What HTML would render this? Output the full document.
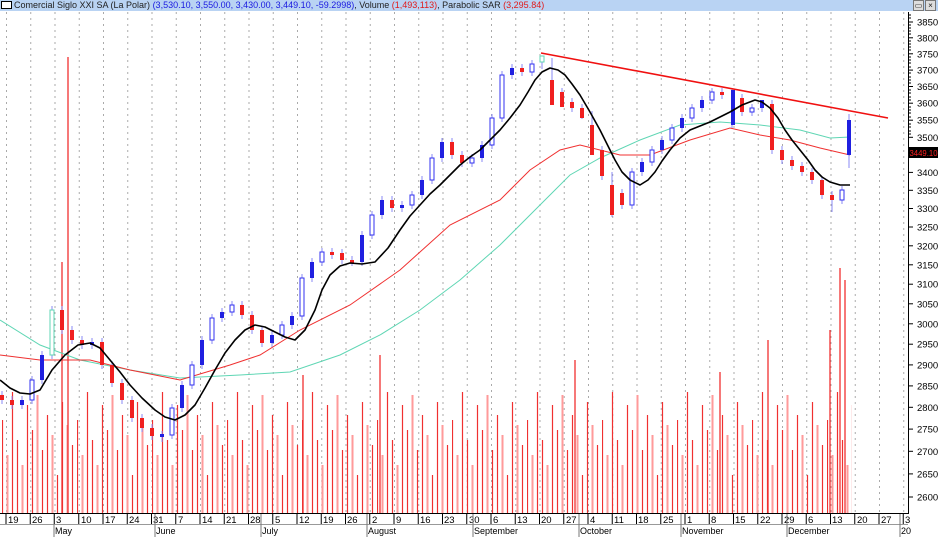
<!DOCTYPE html>
<html><head><meta charset="utf-8">
<style>
html,body{margin:0;padding:0;background:#fff;width:938px;height:537px;overflow:hidden;font-family:"Liberation Sans",sans-serif;}
#hdr{position:absolute;left:0;top:0;width:938px;height:11px;background:#b9d3f3;font-size:9px;line-height:11px;white-space:nowrap;color:#222;z-index:2}
#hdr .b{color:#1a1ae0}#hdr .r{color:#e01a1a}
#box{display:inline-block;width:9px;height:6px;border:1px solid #000;background:#fff;margin:0 2px 0 1px;vertical-align:-1px}
#btns{position:absolute;right:2px;top:0;height:11px}
#btns span{display:inline-block;width:9px;height:9px;border:1px solid #777;background:#ddd;font-size:8px;line-height:9px;text-align:center;margin-left:1px}
svg{position:absolute;left:0;top:0}
</style></head><body>
<div id="hdr"><span id="box"></span>Comercial Siglo XXI SA (La Polar) <span class="b">(3,530.10, 3,550.00, 3,430.00, 3,449.10, -59.2998)</span>, Volume <span class="r">(1,493,113)</span>, Parabolic SAR <span class="r">(3,295.84)</span><div id="btns"><span>&#9645;</span><span>×</span></div></div>
<svg width="938" height="537" xmlns="http://www.w3.org/2000/svg" font-family="Liberation Sans, sans-serif" font-size="9.5">
<defs>
<pattern id="grid" patternUnits="userSpaceOnUse" x="6" y="0" width="24.25" height="6">
<line x1="0.5" y1="0" x2="0.5" y2="2" stroke="#aaa"/>
</pattern>
<pattern id="vol" patternUnits="userSpaceOnUse" x="2" y="380" width="75" height="134">
<g>
<line x1="0.5" y1="134" x2="0.5" y2="40" stroke="#f03030" stroke-width="1.2"/>
<line x1="5.5" y1="134" x2="5.5" y2="75" stroke="#ff9a9a" stroke-width="2"/>
<line x1="10.5" y1="134" x2="10.5" y2="12" stroke="#f03030" stroke-width="1.2"/>
<line x1="15.5" y1="134" x2="15.5" y2="60" stroke="#f03030" stroke-width="1.2"/>
<line x1="20.5" y1="134" x2="20.5" y2="85" stroke="#ff9a9a" stroke-width="2"/>
<line x1="25.5" y1="134" x2="25.5" y2="25" stroke="#f03030" stroke-width="1.2"/>
<line x1="30.5" y1="134" x2="30.5" y2="50" stroke="#f03030" stroke-width="1.2"/>
<line x1="35.5" y1="134" x2="35.5" y2="15" stroke="#ff9a9a" stroke-width="2"/>
<line x1="40.5" y1="134" x2="40.5" y2="70" stroke="#f03030" stroke-width="1.2"/>
<line x1="45.5" y1="134" x2="45.5" y2="35" stroke="#f03030" stroke-width="1.2"/>
<line x1="50.5" y1="134" x2="50.5" y2="55" stroke="#ff9a9a" stroke-width="2"/>
<line x1="55.5" y1="134" x2="55.5" y2="95" stroke="#f03030" stroke-width="1.2"/>
<line x1="60.5" y1="134" x2="60.5" y2="22" stroke="#f03030" stroke-width="1.2"/>
<line x1="65.5" y1="134" x2="65.5" y2="45" stroke="#ff9a9a" stroke-width="2"/>
<line x1="70.5" y1="134" x2="70.5" y2="65" stroke="#f03030" stroke-width="1.2"/>
</g>
</pattern>
</defs>
<rect x="0" y="12" width="905" height="501" fill="url(#grid)"/>
<rect x="0" y="380" width="852" height="133" fill="url(#vol)"/>
<g stroke="#f03030" stroke-width="1.3">
<line x1="62" y1="513" x2="62" y2="262"/><line x1="68" y1="513" x2="68" y2="57"/>
<line x1="768" y1="513" x2="768" y2="340"/><line x1="830" y1="513" x2="830" y2="330"/>
<line x1="840" y1="513" x2="840" y2="268"/><line x1="845" y1="513" x2="845" y2="280"/>
<line x1="380" y1="513" x2="380" y2="355"/><line x1="303" y1="513" x2="303" y2="375"/>
<line x1="720" y1="513" x2="720" y2="372"/><line x1="575" y1="513" x2="575" y2="360"/>
</g>
<polyline fill="none" stroke="#5fd6b4" stroke-width="1" points="0,320 40,345 80,360 130,370 180,378 240,375 290,372 340,355 380,335 420,310 460,280 500,245 540,205 570,175 600,158 640,140 680,125 720,122 760,125 800,130 830,138 850,137"/>
<polyline fill="none" stroke="#f03030" stroke-width="1" points="0,355 40,360 90,360 130,370 180,380 230,365 260,355 300,330 350,305 400,270 450,225 500,200 530,170 560,150 580,145 620,155 650,155 690,140 730,128 760,135 790,140 820,148 850,155"/>
<path fill="none" stroke="#8a8af5" stroke-width="1" d="M2 391V404M12 396V409M22 396V409M32 376V404M42 351V384M52 306V359M62 306V334M72 326V344M82 336V349M92 338V349M102 338V369M112 361V387M122 379V404M132 396V422M142 414V432M152 424V440M162 431V442M172 404V439M182 381V412M192 361V389M202 336V369M212 314V344M222 308V322M232 301V316M242 301V319M252 311V334M262 326V347M272 331V347M282 321V339M292 312V329M302 274V320M312 258V282M322 248V266M332 248V259M342 249V264M352 256V266M362 231V266M372 211V239M382 196V219M392 196V212M402 201V212M412 191V209M422 176V199M432 154V184M442 138V162M452 138V159M462 151V167M472 154V167M482 141V162M492 114V149M502 71V122M512 64V79M522 64V76M532 60V76M542 58V69M552 58V96M562 88V106M572 98V112M582 104V119M592 111V154M602 146V180M612 172V217M622 189V209M632 168V209M642 158V176M652 146V166M662 136V154M672 124V144M682 114V132M692 104V122M702 96V112M712 88V104M722 88V99M732 88V128M742 94V116M752 104V116M762 100V112M772 100V154M782 146V164M792 156V170M802 162V176M812 168V184M822 176V199M832 191V212M842 186V204M849 114V168"/>
<g fill="#2020e0">
<rect x="20" y="400" width="4" height="5"/><rect x="30" y="380" width="4" height="20" fill="#fff" stroke="#3030f0"/><rect x="40" y="355" width="4" height="25"/><rect x="50" y="310" width="4" height="45" fill="#fff" stroke="#5fd6b4"/>
<rect x="90" y="342" width="4" height="3"/><rect x="160" y="434" width="4" height="3"/><rect x="170" y="408" width="4" height="27" fill="#fff" stroke="#3030f0"/><rect x="180" y="385" width="4" height="23"/>
<rect x="190" y="365" width="4" height="20" fill="#fff" stroke="#3030f0"/><rect x="200" y="340" width="4" height="25"/><rect x="210" y="318" width="4" height="22" fill="#fff" stroke="#3030f0"/><rect x="220" y="312" width="4" height="6"/>
<rect x="230" y="305" width="4" height="7" fill="#fff" stroke="#3030f0"/><rect x="270" y="335" width="4" height="8"/><rect x="280" y="325" width="4" height="10" fill="#fff" stroke="#3030f0"/><rect x="290" y="316" width="4" height="9"/>
<rect x="300" y="278" width="4" height="38" fill="#fff" stroke="#3030f0"/><rect x="310" y="262" width="4" height="16"/><rect x="320" y="252" width="4" height="10" fill="#fff" stroke="#3030f0"/><rect x="360" y="235" width="4" height="27"/>
<rect x="370" y="215" width="4" height="20" fill="#fff" stroke="#3030f0"/><rect x="380" y="200" width="4" height="15"/><rect x="400" y="205" width="4" height="3"/><rect x="410" y="195" width="4" height="10" fill="#fff" stroke="#3030f0"/>
<rect x="420" y="180" width="4" height="15"/><rect x="430" y="158" width="4" height="22" fill="#fff" stroke="#3030f0"/><rect x="440" y="142" width="4" height="16"/><rect x="470" y="158" width="4" height="5" fill="#fff" stroke="#3030f0"/>
<rect x="480" y="145" width="4" height="13"/><rect x="490" y="118" width="4" height="27" fill="#fff" stroke="#3030f0"/><rect x="500" y="75" width="4" height="43" fill="#fff" stroke="#3030f0"/><rect x="510" y="68" width="4" height="7"/>
<rect x="530" y="64" width="4" height="8" fill="#fff" stroke="#3030f0"/><rect x="540" y="56" width="4" height="6" fill="#fff" stroke="#5fd6b4"/><rect x="630" y="172" width="4" height="33" fill="#fff" stroke="#3030f0"/><rect x="640" y="162" width="4" height="10"/>
<rect x="650" y="150" width="4" height="12" fill="#fff" stroke="#3030f0"/><rect x="660" y="140" width="4" height="10"/><rect x="670" y="128" width="4" height="12" fill="#fff" stroke="#3030f0"/><rect x="680" y="118" width="4" height="10"/>
<rect x="690" y="108" width="4" height="10" fill="#fff" stroke="#3030f0"/><rect x="700" y="100" width="4" height="8"/><rect x="710" y="92" width="4" height="8" fill="#fff" stroke="#3030f0"/><rect x="731" y="90" width="4" height="35"/>
<rect x="750" y="108" width="4" height="4" fill="#fff" stroke="#3030f0"/><rect x="760" y="100" width="4" height="8"/><rect x="840" y="190" width="4" height="10" fill="#fff" stroke="#3030f0"/><rect x="847" y="120" width="4" height="35"/>
</g>
<g fill="#f02020">
<rect x="0" y="395" width="4" height="5"/><rect x="10" y="400" width="4" height="5"/><rect x="60" y="310" width="4" height="20"/><rect x="70" y="330" width="4" height="10"/>
<rect x="80" y="340" width="4" height="5"/><rect x="100" y="342" width="4" height="23"/><rect x="110" y="365" width="4" height="18"/><rect x="120" y="383" width="4" height="17"/>
<rect x="130" y="400" width="4" height="18"/><rect x="140" y="418" width="4" height="10"/><rect x="150" y="428" width="4" height="8"/><rect x="240" y="305" width="4" height="10"/>
<rect x="250" y="315" width="4" height="15"/><rect x="260" y="330" width="4" height="13"/><rect x="330" y="252" width="4" height="3"/><rect x="340" y="253" width="4" height="7"/>
<rect x="350" y="260" width="4" height="3"/><rect x="390" y="200" width="4" height="8"/><rect x="450" y="142" width="4" height="13"/><rect x="460" y="155" width="4" height="8"/>
<rect x="520" y="68" width="4" height="4"/><rect x="550" y="80" width="4" height="25"/><rect x="560" y="92" width="4" height="15"/><rect x="570" y="102" width="4" height="6"/>
<rect x="580" y="108" width="4" height="10"/><rect x="590" y="125" width="4" height="30"/><rect x="600" y="150" width="4" height="26"/><rect x="610" y="185" width="4" height="30"/>
<rect x="620" y="193" width="4" height="12"/><rect x="720" y="92" width="4" height="3"/><rect x="740" y="98" width="4" height="14"/><rect x="770" y="104" width="4" height="46"/>
<rect x="780" y="150" width="4" height="10"/><rect x="790" y="160" width="4" height="6"/><rect x="800" y="166" width="4" height="6"/><rect x="810" y="172" width="4" height="8"/>
<rect x="820" y="180" width="4" height="15"/><rect x="830" y="195" width="4" height="5"/>
</g>
<polyline fill="none" stroke="#000" stroke-width="1.6" stroke-linejoin="round" points="0,380 10,388 20,393 30,394 40,390 52,370 65,355 78,345 90,343 100,348 110,360 120,372 130,385 142,398 155,410 165,417 175,420 185,415 195,405 205,388 215,370 225,353 235,340 245,330 255,325 265,327 275,332 285,337 295,340 305,330 315,310 322,290 330,275 340,266 350,263 362,264 375,262 388,248 400,230 410,216 420,205 430,194 440,185 450,175 460,165 470,157 480,150 490,140 500,130 510,118 520,105 528,92 535,80 542,72 550,68 558,70 565,75 572,84 580,95 590,112 600,130 608,146 615,160 622,172 630,180 640,185 648,180 655,172 662,161 670,150 680,138 690,130 700,126 710,122 720,117 730,112 742,105 755,100 762,102 770,108 778,118 785,130 792,140 800,150 808,160 815,170 822,177 830,182 840,185 850,185"/>
<line x1="541" y1="53" x2="888" y2="118" stroke="#f01010" stroke-width="1.6"/>
<rect x="908" y="12" width="30" height="502" fill="#fff"/>
<line x1="908.5" y1="12" x2="908.5" y2="514" stroke="#000"/>
<g stroke="#000">
<line x1="908" y1="22" x2="913" y2="22"/><line x1="908" y1="37.8" x2="913" y2="37.8"/><line x1="908" y1="53.8" x2="913" y2="53.8"/><line x1="908" y1="70.1" x2="913" y2="70.1"/><line x1="908" y1="86.5" x2="913" y2="86.5"/><line x1="908" y1="103.2" x2="913" y2="103.2"/><line x1="908" y1="120.2" x2="913" y2="120.2"/><line x1="908" y1="137.3" x2="913" y2="137.3"/><line x1="908" y1="154.7" x2="913" y2="154.7"/><line x1="908" y1="172.4" x2="913" y2="172.4"/><line x1="908" y1="190.3" x2="913" y2="190.3"/><line x1="908" y1="208.5" x2="913" y2="208.5"/><line x1="908" y1="227" x2="913" y2="227"/><line x1="908" y1="245.8" x2="913" y2="245.8"/><line x1="908" y1="264.8" x2="913" y2="264.8"/><line x1="908" y1="284.2" x2="913" y2="284.2"/><line x1="908" y1="303.8" x2="913" y2="303.8"/><line x1="908" y1="323.8" x2="913" y2="323.8"/><line x1="908" y1="344.2" x2="913" y2="344.2"/><line x1="908" y1="364.9" x2="913" y2="364.9"/><line x1="908" y1="385.9" x2="913" y2="385.9"/><line x1="908" y1="407.3" x2="913" y2="407.3"/><line x1="908" y1="429.1" x2="913" y2="429.1"/><line x1="908" y1="451.3" x2="913" y2="451.3"/><line x1="908" y1="473.9" x2="913" y2="473.9"/><line x1="908" y1="497" x2="913" y2="497"/>
</g>
<path d="M908 15H911M908 18H911M908 25H911M908 28H911M908 31H911M908 34H911M908 41H911M908 44H911M908 47H911M908 50H911M908 57H911M908 60H911M908 63H911M908 67H911M908 73H911M908 77H911M908 80H911M908 83H911M908 90H911M908 93H911M908 97H911M908 100H911M908 107H911M908 110H911M908 113H911M908 117H911M908 124H911M908 127H911M908 131H911M908 134H911" stroke="#000"/>
<g font-size="9.5">
<text x="917" y="25.5">3850</text><text x="917" y="41.3">3800</text><text x="917" y="57.3">3750</text><text x="917" y="73.6">3700</text><text x="917" y="90">3650</text><text x="917" y="106.7">3600</text><text x="917" y="123.7">3550</text><text x="917" y="140.8">3500</text><text x="917" y="175.9">3400</text><text x="917" y="193.8">3350</text><text x="917" y="212">3300</text><text x="917" y="230.5">3250</text><text x="917" y="249.3">3200</text><text x="917" y="268.3">3150</text><text x="917" y="287.7">3100</text><text x="917" y="307.3">3050</text><text x="917" y="327.3">3000</text><text x="917" y="347.7">2950</text><text x="917" y="368.4">2900</text><text x="917" y="389.4">2850</text><text x="917" y="410.8">2800</text><text x="917" y="432.6">2750</text><text x="917" y="454.8">2700</text><text x="917" y="477.4">2650</text><text x="917" y="500.5">2600</text>
</g>
<rect x="909" y="147" width="29" height="11" fill="#000"/><text x="909.5" y="156" fill="#ff2020" font-size="8" textLength="28" lengthAdjust="spacingAndGlyphs">3449.10</text>
<rect x="0" y="514" width="938" height="23" fill="#fff"/>
<line x1="0" y1="513.5" x2="908" y2="513.5" stroke="#000"/>
<line x1="0" y1="524.5" x2="908" y2="524.5" stroke="#999"/>
<path stroke="#000" d="M6 514V524M30.25 514V524M54.5 514V524M78.75 514V524M103 514V524M127.25 514V524M151.5 514V524M175.75 514V524M200 514V524M224.25 514V524M248.5 514V524M272.75 514V524M297 514V524M321.25 514V524M345.5 514V524M369.75 514V524M394 514V524M418.25 514V524M442.5 514V524M466.75 514V524M491 514V524M515.25 514V524M539.5 514V524M563.75 514V524M588 514V524M612.25 514V524M636.5 514V524M660.75 514V524M685 514V524M709.25 514V524M733.5 514V524M757.75 514V524M782 514V524M806.25 514V524M830.5 514V524M854.75 514V524M879 514V524M903.25 514V524"/>
<g font-size="9.5">
<text x="8" y="523">19</text><text x="32" y="523">26</text><text x="56" y="523">3</text><text x="81" y="523">10</text><text x="105" y="523">17</text><text x="129" y="523">24</text><text x="153" y="523">31</text><text x="178" y="523">7</text><text x="202" y="523">14</text><text x="226" y="523">21</text><text x="250" y="523">28</text><text x="275" y="523">5</text><text x="299" y="523">12</text><text x="323" y="523">19</text><text x="347" y="523">26</text><text x="372" y="523">2</text><text x="396" y="523">9</text><text x="420" y="523">16</text><text x="444" y="523">23</text><text x="469" y="523">30</text><text x="493" y="523">6</text><text x="517" y="523">13</text><text x="541" y="523">20</text><text x="566" y="523">27</text><text x="590" y="523">4</text><text x="614" y="523">11</text><text x="638" y="523">18</text><text x="663" y="523">25</text><text x="687" y="523">1</text><text x="711" y="523">8</text><text x="735" y="523">15</text><text x="760" y="523">22</text><text x="784" y="523">29</text><text x="808" y="523">6</text><text x="832" y="523">13</text><text x="857" y="523">20</text><text x="881" y="523">27</text><text x="905" y="523">3</text>
</g>
<path stroke="#777" d="M54 514V537M155 514V537M261 514V537M367 514V537M473 514V537M579 514V537M681 514V537M787 514V537M900 514V537"/>
<g font-size="9">
<text x="55" y="534">May</text><text x="156" y="534">June</text><text x="262" y="534">July</text><text x="368" y="534">August</text><text x="474" y="534">September</text><text x="580" y="534">October</text><text x="682" y="534">November</text><text x="788" y="534">December</text><text x="901" y="534">20</text>
</g>
</svg>
</body></html>
